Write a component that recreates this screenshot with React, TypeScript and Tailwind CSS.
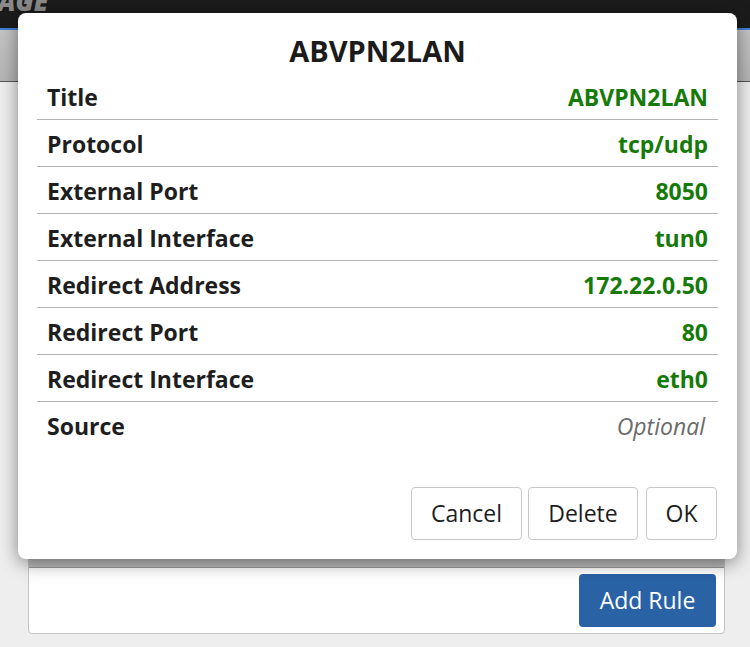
import React from "react";

const rows: { label: string; value: string; optional?: boolean }[] = [
  { label: "Title", value: "ABVPN2LAN" },
  { label: "Protocol", value: "tcp/udp" },
  { label: "External Port", value: "8050" },
  { label: "External Interface", value: "tun0" },
  { label: "Redirect Address", value: "172.22.0.50" },
  { label: "Redirect Port", value: "80" },
  { label: "Redirect Interface", value: "eth0" },
  { label: "Source", value: "Optional", optional: true },
];

export default function App() {
  return (
    <div
      className="relative w-[750px] h-[647px] overflow-hidden bg-[#eeeeee]"
      style={{ fontFamily: '"Open Sans", "Noto Sans", sans-serif' }}
    >
      {/* top navigation */}
      <div className="h-[28px] bg-[#1b1b1b] overflow-hidden">
        <div className="-mt-[12px] -ml-[2px] text-[26px] font-extrabold italic text-[#8a8a8a] leading-[26px]">
          AGE
        </div>
      </div>
      <div className="h-[2px] bg-[#3f7fd8]" />
      <div className="h-[52px] bg-gradient-to-b from-[#c4c4c4] to-[#b4b4b4] border-b border-[#555]" />

      {/* background card */}
      <div className="ml-[28px] mr-[25px] mt-[466px] h-[86px] bg-white border border-[#c4c4c4] rounded-b-[4px] flex flex-col">
        <div className="h-[19px] bg-[#bdbdbd] border-b border-[#9a9a9a]" />
        <div className="flex-1 flex justify-end items-start pt-[6px] pr-[8px]">
          <button className="h-[53px] w-[137px] rounded-[4px] bg-[#2a62a6] text-white text-[23px]">
            Add Rule
          </button>
        </div>
      </div>

      {/* modal */}
      <div className="absolute left-[18px] top-[13px] w-[719px] h-[546px] bg-white rounded-[8px] shadow-[0_4px_18px_rgba(0,0,0,0.45)] flex flex-col">
        <div className="h-[60px] pt-[18px] text-center text-[29px] font-bold text-[#1b1b1b] leading-[40px]">
          ABVPN2LAN
        </div>
        <div className="mx-[19px] flex flex-col">
          {rows.map((r, i) => (
            <div
              key={r.label}
              className={
                "h-[47px] px-[10px] pt-[2px] flex items-center justify-between text-[23px] " +
                (i < rows.length - 1 ? "border-b border-[#b3b3b3]" : "")
              }
            >
              <span className="font-bold text-[#1e1e1e]">{r.label}</span>
              {r.optional ? (
                <span className="italic text-[#6b6b6b] pr-[3px]">{r.value}</span>
              ) : (
                <span className="font-bold text-[#167a08]">{r.value}</span>
              )}
            </div>
          ))}
        </div>
        <div className="mt-[38px] pr-[20px] flex justify-end gap-[6px]">
          <button className="h-[53px] w-[111px] rounded-[4px] border border-[#c8c8c8] bg-white text-[23px] text-[#1e1e1e]">
            Cancel
          </button>
          <button className="h-[53px] w-[110px] rounded-[4px] border border-[#c8c8c8] bg-white text-[23px] text-[#1e1e1e] mr-[2px]">
            Delete
          </button>
          <button className="h-[53px] w-[71px] rounded-[4px] border border-[#c8c8c8] bg-white text-[23px] text-[#1e1e1e]">
            OK
          </button>
        </div>
      </div>
    </div>
  );
}
